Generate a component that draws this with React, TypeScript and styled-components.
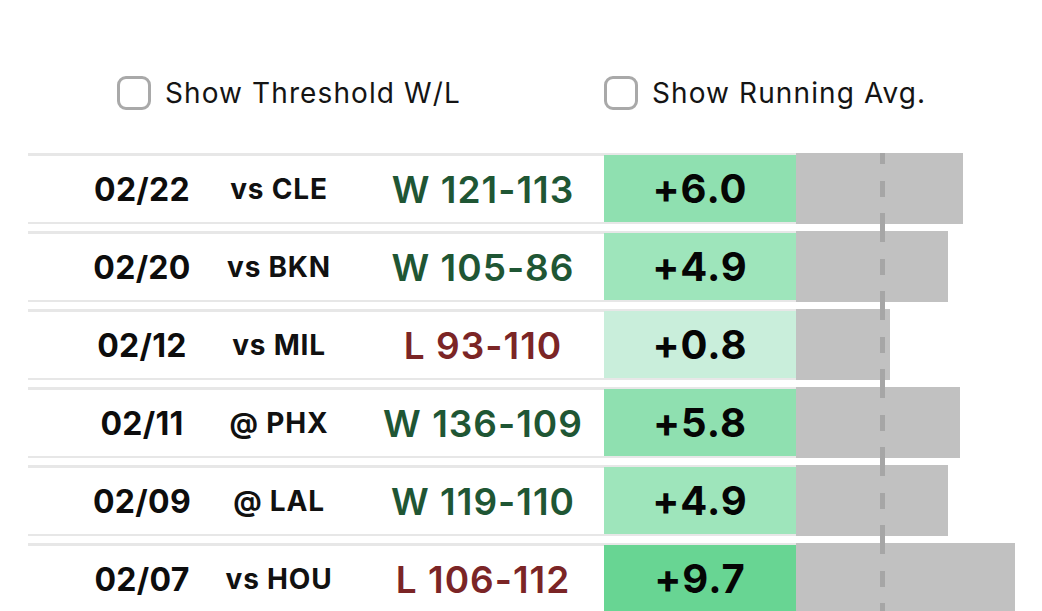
import React from 'react'
import styled, { createGlobalStyle } from 'styled-components'

const GlobalStyle = createGlobalStyle`
  html, body {
    margin: 0;
    padding: 0;
    background: #ffffff;
    overflow: hidden;
  }
  body {
    font-family: Inter, "Noto Sans", "Liberation Sans", sans-serif;
    color: #111111;
  }
`

type Game = {
  date: string
  opp: string
  result: 'W' | 'L'
  score: string
  diff: number
}

const games: Game[] = [
  { date: '02/22', opp: 'vs CLE', result: 'W', score: '121-113', diff: 6.0 },
  { date: '02/20', opp: 'vs BKN', result: 'W', score: '105-86', diff: 4.9 },
  { date: '02/12', opp: 'vs MIL', result: 'L', score: '93-110', diff: 0.8 },
  { date: '02/11', opp: '@ PHX', result: 'W', score: '136-109', diff: 5.8 },
  { date: '02/09', opp: '@ LAL', result: 'W', score: '119-110', diff: 4.9 },
  { date: '02/07', opp: 'vs HOU', result: 'L', score: '106-112', diff: 9.7 },
]

// light mint for small edges, stronger green for big ones
const toneFor = (diff: number) => {
  if (diff >= 8) return '#68d593'
  if (diff >= 5.5) return '#8fe0b0'
  if (diff >= 3) return '#9ee5bb'
  return '#c9eedb'
}

const Page = styled.div`
  padding-top: 76px;
`

const Controls = styled.div`
  display: grid;
  grid-template-columns: 487px auto;
  padding-left: 117px;
  margin-bottom: 43px;
`

const Toggle = styled.label`
  display: flex;
  align-items: center;
  gap: 14px;
  font-size: 28px;
  letter-spacing: 1.1px;
  color: #141414;
  cursor: pointer;
`

const Box = styled.span`
  display: inline-block;
  box-sizing: border-box;
  width: 34px;
  height: 34px;
  border: 3px solid #a9a9a9;
  border-radius: 9px;
  background: #fff;
`

const List = styled.div`
  position: relative;
  display: flex;
  flex-direction: column;
  gap: 7px;
  padding-left: 28px;
`

const ThresholdLine = styled.div`
  position: absolute;
  left: 880px;
  top: 0;
  bottom: 0;
  width: 5px;
  background: repeating-linear-gradient(
    to bottom,
    #a6a6a6 0px,
    #a6a6a6 11px,
    transparent 11px,
    transparent 28px,
    #a6a6a6 28px,
    #a6a6a6 44px,
    transparent 44px,
    transparent 60px,
    #a6a6a6 60px,
    #a6a6a6 78px
  );
  pointer-events: none;
`

const Row = styled.div`
  display: flex;
  align-items: stretch;
  height: 71px;
`

const Card = styled.div`
  box-sizing: border-box;
  width: 768px;
  display: grid;
  grid-template-columns: 172px 102px 274px 192px;
  padding-left: 28px;
  border-top: 3px solid #e7e7e7;
  border-bottom: 2px solid #e7e7e7;
  background: #ffffff;
`

const Cell = styled.div`
  display: flex;
  align-items: center;
  justify-content: center;
  white-space: nowrap;
`

const DateCell = styled(Cell)`
  font-size: 32px;
  font-weight: 700;
  letter-spacing: 0.3px;
  color: #0d0d0d;
`

const OppCell = styled(Cell)`
  font-size: 28px;
  font-weight: 700;
  letter-spacing: 0.8px;
  color: #111;
`

const ResultCell = styled(Cell)<{ $win: boolean }>`
  padding-left: 32px;
  font-size: 37px;
  font-weight: 600;
  letter-spacing: 1px;
  color: ${(p) => (p.$win ? '#1f5634' : '#7b2526')};
`

const DiffCell = styled(Cell)<{ $tone: string }>`
  margin-top: -1px;
  background: ${(p) => p.$tone};
  font-size: 40px;
  font-weight: 700;
  letter-spacing: 1px;
  color: #050505;
`

const Bar = styled.div`
  background: #c1c1c1;
`

export default function App() {
  return (
    <>
      <GlobalStyle />
      <Page>
        <Controls>
          <Toggle>
            <Box />
            Show Threshold W/L
          </Toggle>
          <Toggle>
            <Box />
            Show Running Avg.
          </Toggle>
        </Controls>
        <List>
          {games.map((g) => (
            <Row key={g.date}>
              <Card>
                <DateCell>{g.date}</DateCell>
                <OppCell>{g.opp}</OppCell>
                <ResultCell $win={g.result === 'W'}>
                  {g.result} {g.score}
                </ResultCell>
                <DiffCell $tone={toneFor(g.diff)}>+{g.diff.toFixed(1)}</DiffCell>
              </Card>
              <Bar style={{ width: `${Math.round(83 + g.diff * 14)}px` }} />
            </Row>
          ))}
          <ThresholdLine />
        </List>
      </Page>
    </>
  )
}
